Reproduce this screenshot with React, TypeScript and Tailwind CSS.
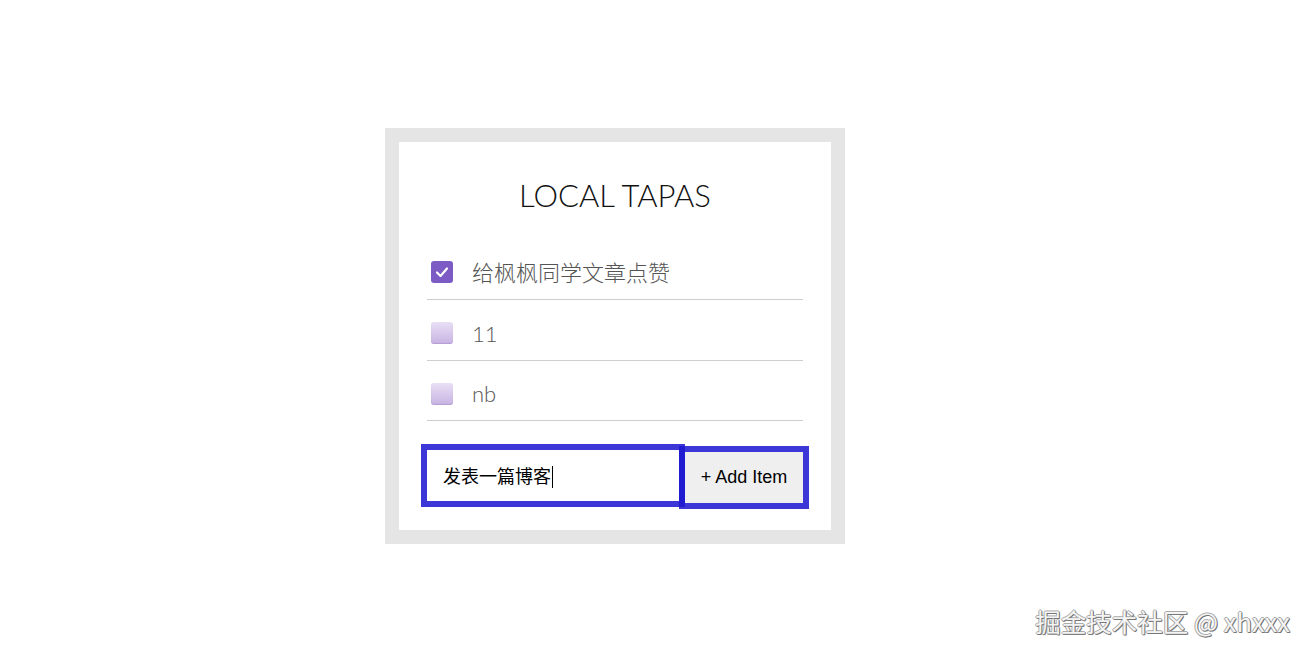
import React from "react";

const items = [
  { text: "给枫枫同学文章点赞", done: true },
  { text: "11", done: false },
  { text: "nb", done: false },
];

function Box({ done }: { done: boolean }) {
  if (done) {
    return (
      <span className="flex h-[22px] w-[22px] shrink-0 items-center justify-center rounded-[3px] bg-[#7c5cc4]">
        <svg width="16" height="16" viewBox="0 0 16 16" fill="none">
          <path d="M3 8.5 L6.5 12 L13 4.5" stroke="#fff" strokeWidth="2.2" strokeLinecap="round" strokeLinejoin="round" />
        </svg>
      </span>
    );
  }
  return (
    <span className="block h-[22px] w-[22px] shrink-0 rounded-[3px] bg-gradient-to-b from-[#e9e0f5] to-[#c7b3e2] shadow-[inset_0_-1px_1px_rgba(120,90,170,0.25)]" />
  );
}

export default function App() {
  return (
    <div className="relative min-h-[655px] w-full bg-white" style={{ fontFamily: "Lato, 'Noto Sans CJK SC', sans-serif" }}>
      <div className="ml-[385px] pt-[128px]">
        <div className="w-[460px] bg-[#e5e5e5] p-[14px]">
          <div className="bg-white px-[28px] pb-[27px] pt-[33px]">
            <h1 className="text-center text-[31px] font-light leading-[40px] text-[#111]">LOCAL TAPAS</h1>
            <ul className="mt-[24px]">
              {items.map((it, i) => (
                <li key={it.text} className={`flex items-center border-b border-[#cfcfcf] pl-[4px] pt-[6px] ${i === 2 ? "h-[60px]" : "h-[61px]"}`}>
                  <Box done={it.done} />
                  <span className="ml-[19px] text-[22px] font-light text-[#555]">{it.text}</span>
                </li>
              ))}
            </ul>
            <div className="mt-[29px] flex gap-[6px]">
              <div className="flex h-[51px] w-[252px] items-center bg-white pl-[16px] pt-[3px] outline-[6px] outline-solid outline-[rgba(28,22,207,0.86)]" style={{ fontFamily: "'Liberation Sans', 'Noto Sans CJK SC', sans-serif" }}>
                <span className="text-[18px] text-black">发表一篇博客</span>
                <span className="ml-[1px] inline-block h-[22px] w-px bg-black" />
              </div>
              <button className="mt-[2px] h-[51px] flex-1 bg-[#efefef] text-[18px] text-black outline-[6px] outline-solid outline-[rgba(28,22,207,0.86)]" style={{ fontFamily: "'Liberation Sans', sans-serif" }}>
                + Add Item
              </button>
            </div>
          </div>
        </div>
      </div>
      <div
        className="absolute right-[18px] top-[602px] text-[25.5px] text-[#f4f4f4]"
        style={{ fontFamily: "'Noto Sans CJK SC', 'Liberation Sans', sans-serif", textShadow: "1px 1px 0 #777, -1px 0 0 #aaa, 0 -1px 0 #aaa, 1px 0 0 #888, 0 1px 0 #888" }}
      >
        掘金技术社区 @ xhxxx
      </div>
    </div>
  );
}
